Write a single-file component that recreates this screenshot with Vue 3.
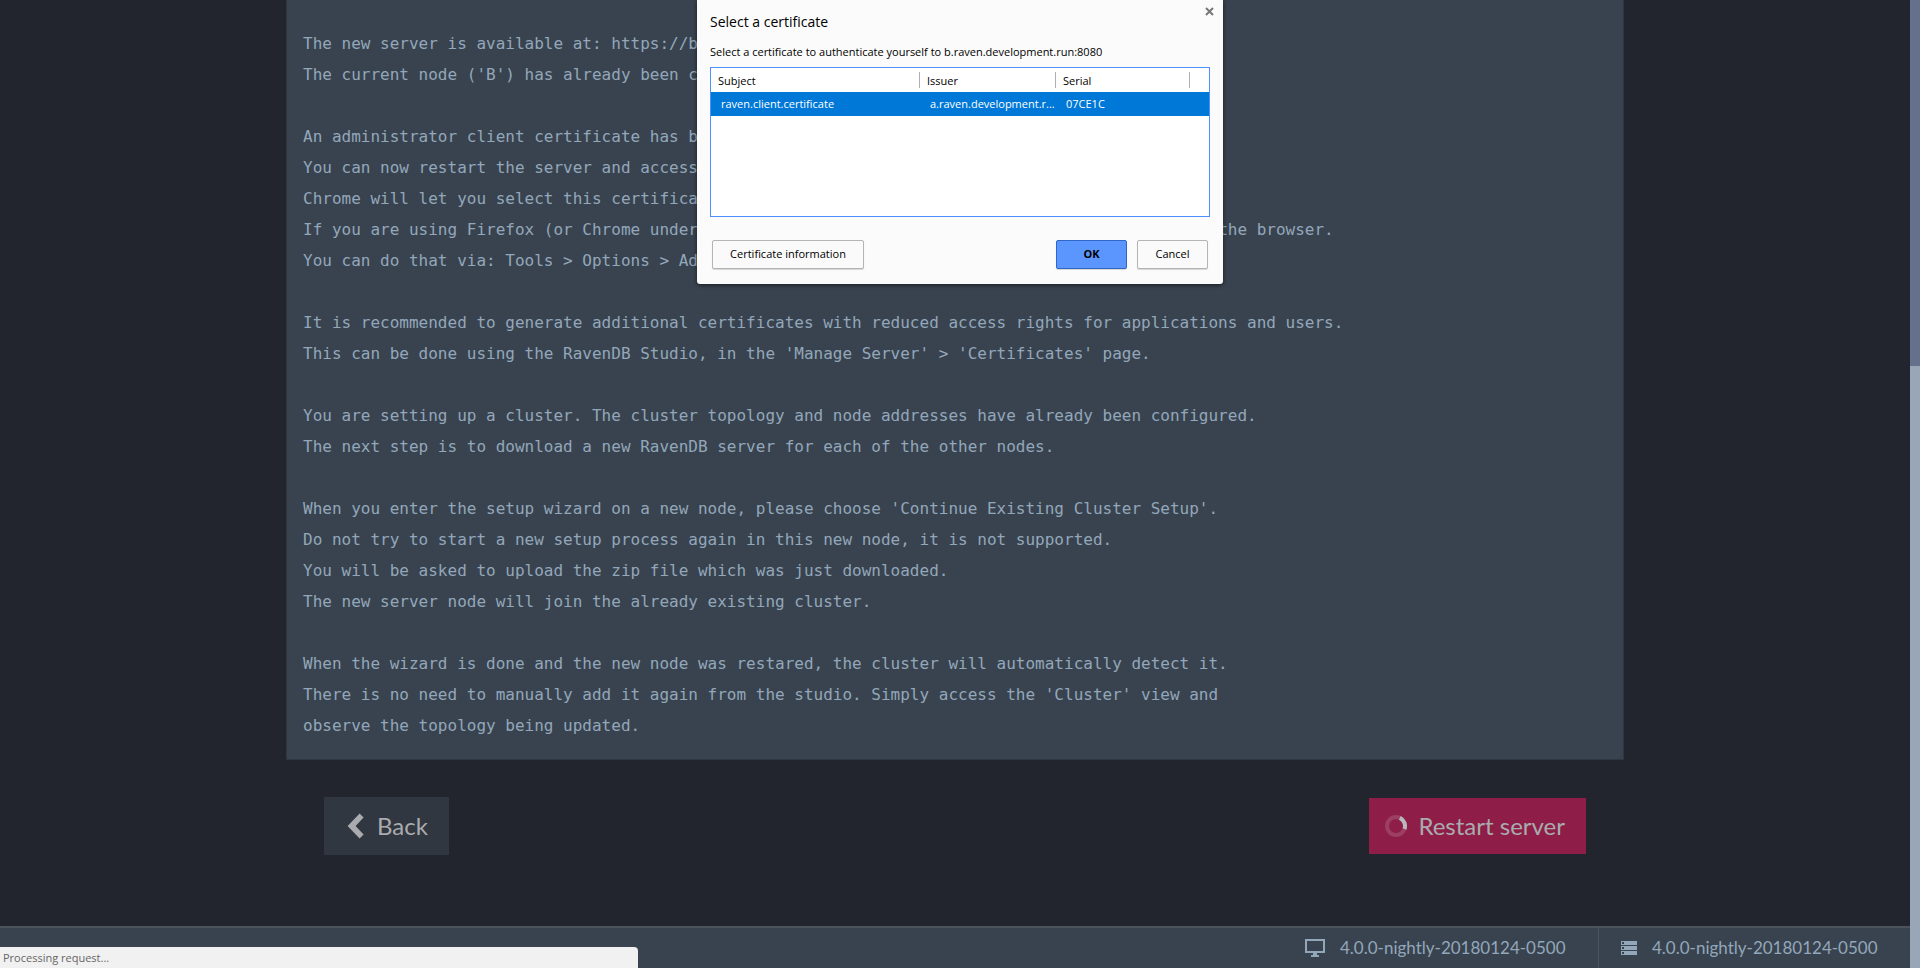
<script setup>
const lines = [
  { text: 'The new server is available at: https://b' },
  { text: "The current node ('B') has already been c" },
  { text: '' },
  { text: 'An administrator client certificate has b' },
  { text: 'You can now restart the server and access' },
  { text: 'Chrome will let you select this certifica' },
  { text: 'If you are using Firefox (or Chrome under', tail: 'the browser.' },
  { text: 'You can do that via: Tools > Options > Ad' },
  { text: '' },
  { text: 'It is recommended to generate additional certificates with reduced access rights for applications and users.' },
  { text: "This can be done using the RavenDB Studio, in the 'Manage Server' > 'Certificates' page." },
  { text: '' },
  { text: 'You are setting up a cluster. The cluster topology and node addresses have already been configured.' },
  { text: 'The next step is to download a new RavenDB server for each of the other nodes.' },
  { text: '' },
  { text: "When you enter the setup wizard on a new node, please choose 'Continue Existing Cluster Setup'." },
  { text: 'Do not try to start a new setup process again in this new node, it is not supported.' },
  { text: 'You will be asked to upload the zip file which was just downloaded.' },
  { text: 'The new server node will join the already existing cluster.' },
  { text: '' },
  { text: 'When the wizard is done and the new node was restared, the cluster will automatically detect it.' },
  { text: "There is no need to manually add it again from the studio. Simply access the 'Cluster' view and" },
  { text: 'observe the topology being updated.' },
]

const version = '4.0.0-nightly-20180124-0500'
const certificates = [
  { subject: 'raven.client.certificate', issuer: 'a.raven.development.r...', serial: '07CE1C' },
]
</script>

<template>
  <div class="screen">
    <div class="page">
      <main class="content">
        <div class="message">
          <div v-for="(line, i) in lines" :key="i" class="line">
            <span>{{ line.text }}</span>
            <span v-if="line.tail">{{ line.tail }}</span>
          </div>
        </div>
        <div class="actions">
          <button type="button" class="btn back">
            <svg class="chevron" viewBox="0 0 17 26" aria-hidden="true">
              <path d="M12.6 0.6 L16.6 4.6 L8.6 13 L16.6 21.4 L12.6 25.4 L0.6 13 Z" />
            </svg>
            Back
          </button>
          <button type="button" class="btn restart">
            <svg class="spinner" viewBox="0 0 22 22" aria-hidden="true">
              <circle class="ring" cx="11" cy="11" r="9" />
              <path class="arc" d="M14.8 2.9 A9 9 0 0 1 19.5 14" />
            </svg>
            Restart server
          </button>
        </div>
      </main>
      <footer class="footer">
        <div class="version">
          <svg class="monitor" viewBox="0 0 20 18" aria-hidden="true">
            <path
              fill-rule="evenodd"
              d="M0 0 H20 V14 H12 V16 H14 V18 H6 V16 H8 V14 H0 Z M2 2 V12 H18 V2 Z"
            />
          </svg>
          <span>{{ version }}</span>
        </div>
        <div class="version server">
          <svg class="rack" viewBox="0 0 16 14" aria-hidden="true">
            <path
              fill-rule="evenodd"
              d="M0 0 H16 V4 H0 Z M1 1 V3 H3 V1 Z M0 5 H16 V9 H0 Z M1 6 V8 H3 V6 Z M0 10 H16 V14 H0 Z M1 11 V13 H3 V11 Z"
            />
          </svg>
          <span>{{ version }}</span>
        </div>
      </footer>
    </div>
    <div class="scrollbar"><div class="thumb"></div></div>

    <div class="status">Processing request...</div>

    <section class="dialog" role="dialog" aria-labelledby="dialog-title">
      <button type="button" class="close" aria-label="Close">
        <svg viewBox="0 0 9 9" aria-hidden="true"><path d="M1 1 L8 8 M8 1 L1 8" /></svg>
      </button>
      <h1 id="dialog-title">Select a certificate</h1>
      <p>Select a certificate to authenticate yourself to b.raven.development.run:8080</p>
      <div class="list">
        <table>
          <colgroup>
            <col class="c-subject" />
            <col class="c-issuer" />
            <col class="c-serial" />
            <col />
          </colgroup>
          <thead>
            <tr>
              <th>Subject</th>
              <th>Issuer</th>
              <th>Serial</th>
              <th class="last"></th>
            </tr>
          </thead>
          <tbody>
            <tr v-for="c in certificates" :key="c.serial">
              <td>{{ c.subject }}</td>
              <td>{{ c.issuer }}</td>
              <td>{{ c.serial }}</td>
              <td></td>
            </tr>
          </tbody>
        </table>
      </div>
      <div class="dialog-actions">
        <button type="button" class="dbtn info">Certificate information</button>
        <button type="button" class="dbtn ok">OK</button>
        <button type="button" class="dbtn">Cancel</button>
      </div>
    </section>
  </div>
</template>

<style>
body {
  background: #22252d;
}
</style>

<style scoped>
.screen {
  position: relative;
  display: flex;
  min-height: 100vh;
  overflow: hidden;
  background: #22252d;
}
.page {
  flex: 1;
  min-width: 0;
  display: flex;
  flex-direction: column;
  font-family: Lato, sans-serif;
}
.content {
  width: calc(70% + 1px);
  margin: 0 auto;
}
.message {
  padding: 28px 16px 18px;
  border: 1px solid #2e373f;
  border-top: 0;
  background: #39434f;
  color: #93a7ba;
  font: 16px/31px "DejaVu Sans Mono", monospace;
}
.line {
  display: flex;
  gap: 54ch;
  min-height: 31px;
  white-space: pre;
}
.actions {
  display: flex;
  justify-content: space-between;
  align-items: center;
  padding: 37px 38px;
}
.btn {
  display: flex;
  align-items: center;
  border: 0;
  color: #a9abae;
  font: 24px/32px Lato, sans-serif;
}
.back {
  gap: 13px;
  height: 58px;
  padding: 0 21px 0 23px;
  background: #313740;
}
.restart {
  gap: 11px;
  height: 56px;
  padding: 0 21px 0 16px;
  background: #8e1e47;
}
.chevron {
  width: 17px;
  height: 26px;
  fill: #a9abae;
}
.spinner {
  width: 22px;
  height: 22px;
  fill: none;
  stroke-width: 4;
}
.ring {
  stroke: #9c3f62;
}
.arc {
  stroke: #b9b9bb;
}
.footer {
  display: flex;
  justify-content: flex-end;
  height: 40px;
  margin-top: auto;
  border-top: 2px solid #4b535b;
  background: #39434f;
  color: #93a7ba;
  font-size: 17px;
  line-height: 24px;
}
.version {
  display: flex;
  align-items: center;
  gap: 15px;
  padding: 0 28px;
}
.version span {
  min-width: 230px;
}
.server {
  padding-left: 22px;
  border-left: 1px solid #4a5562;
}
.monitor {
  width: 20px;
  height: 18px;
  fill: #93a7ba;
}
.rack {
  width: 16px;
  height: 14px;
  fill: #93a7ba;
}
.scrollbar {
  flex: 0 0 10px;
  background: #98a6b7;
}
.thumb {
  height: 366px;
  background: #64708c;
}
.status {
  position: absolute;
  left: 0;
  bottom: 0;
  box-sizing: border-box;
  width: 638px;
  height: 21px;
  padding-left: 3px;
  border-radius: 0 4px 0 0;
  background: #f1f1f1;
  color: #666;
  font: 11px/21px "Open Sans", sans-serif;
}
.dialog {
  position: absolute;
  top: 0;
  left: 50%;
  transform: translateX(-50%);
  box-sizing: border-box;
  width: 526px;
  padding: 10px 13px 15px;
  border-radius: 0 0 3px 3px;
  background: #fbfbfb;
  box-shadow: 0 1px 4px rgba(0, 0, 0, 0.6);
  color: #000;
  font: 11px/16px "Open Sans", sans-serif;
}
.close {
  position: absolute;
  top: 7px;
  right: 9px;
  display: flex;
  padding: 0;
  border: 0;
  background: none;
}
.close svg {
  width: 9px;
  height: 9px;
  stroke: #777;
  stroke-width: 2;
}
h1 {
  margin: 0;
  font-size: 14px;
  font-weight: 400;
  line-height: 24px;
}
p {
  margin: 10px 0 7px;
  white-space: nowrap;
}
.list {
  height: 148px;
  border: 1px solid #4d90fe;
  background: #fff;
}
table {
  width: 100%;
  border-collapse: collapse;
  table-layout: fixed;
}
.c-subject {
  width: 209px;
}
.c-issuer {
  width: 136px;
}
.c-serial {
  width: 134px;
}
th,
td {
  height: 24px;
  box-sizing: border-box;
  padding: 0 0 0 7px;
  font-weight: 400;
  text-align: left;
  white-space: nowrap;
}
th {
  padding-top: 2px;
  background: linear-gradient(#b0b0b0, #b0b0b0) right center / 1px 16px no-repeat;
}
th.last {
  background: none;
}
td {
  padding-left: 10px;
  background: #0078d7;
  color: #fff;
}
.dialog-actions {
  display: flex;
  gap: 10px;
  margin-top: 23px;
  padding: 0 2px;
}
.dbtn {
  box-sizing: border-box;
  width: 71px;
  height: 29px;
  padding: 0 0 2px;
  border: 1px solid #b4b4b4;
  border-radius: 2px;
  background: #fafafa;
  box-shadow: 0 1px 1px rgba(0, 0, 0, 0.15);
  color: #000;
  font: 11px/16px "Open Sans", sans-serif;
  white-space: nowrap;
}
.info {
  width: 152px;
  margin-right: auto;
}
.ok {
  border-color: #2f66c8;
  background: #5b96ff;
  font-weight: 700;
}
</style>
